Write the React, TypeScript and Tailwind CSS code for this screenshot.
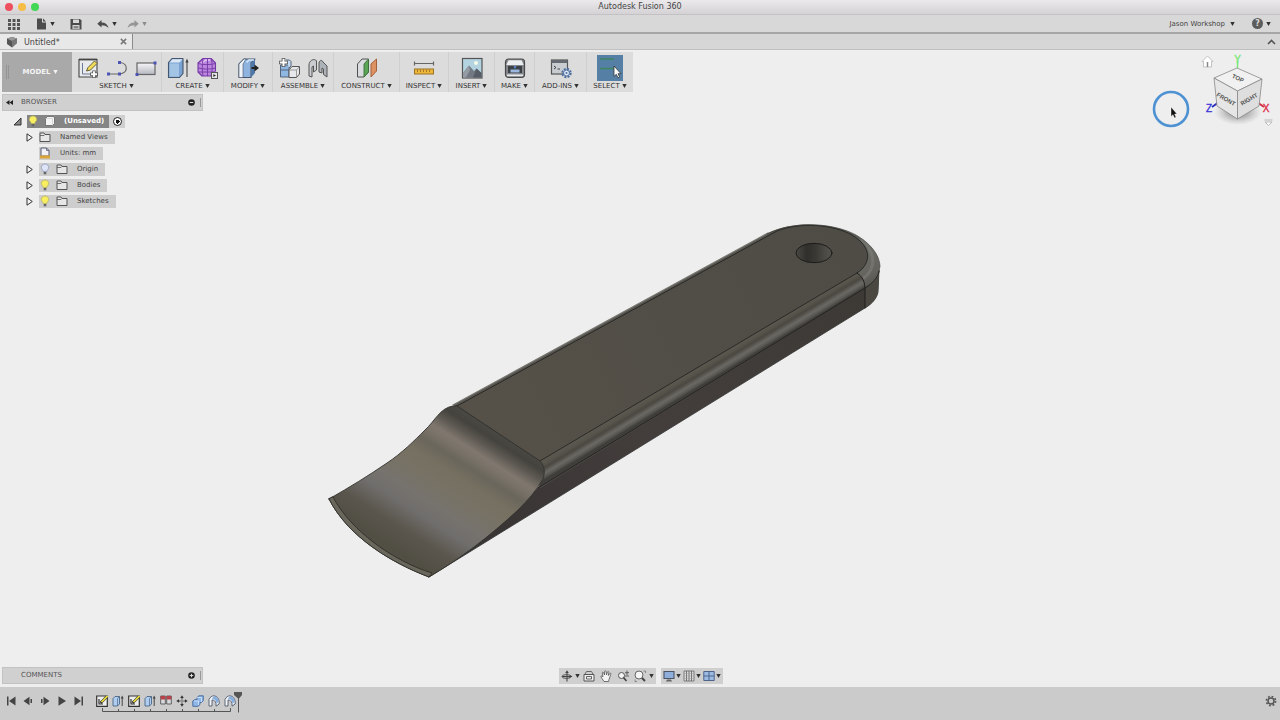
import React from "react";

const Caret = ({ className = "text-[#333]" }: { className?: string }) => (
  <svg viewBox="0 0 5 4" className={`w-[5px] h-1 shrink-0 ${className}`} aria-hidden="true">
    <path d="M.300 0H4.700L2.500 4Z" fill="currentColor" />
  </svg>
);

interface IconProps {
  children: React.ReactNode;
  className?: string;
  box?: number;
}

const Icon: React.FC<IconProps> = ({ children, className = "w-[22px] h-[22px]", box = 22 }) => (
  <svg viewBox={`0 0 ${box} ${box}`} className={`shrink-0 ${className}`} fill="none" aria-hidden="true">
    {children}
  </svg>
);

const SketchIcon = () => (
  <Icon>
    <path d="M2 2.500H20V20H2Z" fill="#e9eaec" stroke="#444" strokeWidth="1.100" />
    <path d="M2 2.500H20" stroke="#444" strokeWidth="1.800" />
    <path d="M5.500 6V17H14" stroke="#6a7a98" strokeWidth="1" />
    <path d="M9.500 14L11 10.500L17.500 4L20 6.500L13.500 13Z" fill="#f1dc5a" stroke="#55502a" strokeWidth=".9" />
    <path d="M17 13.500V21M13.200 17.300H20.800" stroke="#555" strokeWidth="3.400" />
    <path d="M17 14.300V20.300M14 17.300H20" stroke="#fff" strokeWidth="1.900" />
  </Icon>
);

const SplineIcon = () => (
  <Icon>
    <path d="M2 17H13C22 17 23 6.500 14 5.500" stroke="#666" strokeWidth="1.200" />
    <path d="M1 15.500h3v3H1zM12 15.500h3v3h-3zM12 4h3v3h-3z" fill="#4d55b4" />
  </Icon>
);

const RectIcon = () => (
  <Icon>
    <rect x="2" y="6" width="18" height="11.500" fill="url(#rectFill)" stroke="#666" strokeWidth="1.200" />
    <path d="M.500 16h3v3h-3zM18.500 4.500h3v3h-3z" fill="#4d55b4" />
    <defs>
      <linearGradient id="rectFill" x1="0" y1="0" x2="0" y2="1">
        <stop stopColor="#f6f6f8" />
        <stop offset="1" stopColor="#b5b8c0" />
      </linearGradient>
    </defs>
  </Icon>
);

const ExtrudeIcon = () => (
  <Icon>
    <path d="M1.500 5.500L5 1.500H16V16.500L12.500 20.500H1.500Z" fill="#7aa3d3" stroke="#46566c" strokeWidth="1.100" strokeLinejoin="round" />
    <path d="M2.500 5.500L5.500 2.200H15.500L12.500 5.500Z" fill="#dbe7f5" />
    <path d="M2.500 6.500H12V19.700H2.500Z" fill="#a4c4e6" />
    <path d="M20 20V5" stroke="#444" strokeWidth="1.100" />
    <path d="M20 1.500L18.400 5.500H21.600Z" fill="#444" />
  </Icon>
);

const FormIcon = () => (
  <Icon>
    <path d="M2 6L7 1.500H15L19.500 6V14L15 19H6L2 15Z" fill="#bb86dd" stroke="#7438a6" strokeWidth="1.100" strokeLinejoin="round" />
    <path d="M5 6.500L10 3H14" stroke="#e2c6f4" strokeWidth="1.500" />
    <path d="M2 6.500C8 8 14 8 19.500 6.500M2 11C8 12.500 14 12.500 19.500 11M2.500 15H18M7 2C6 8 6 13 7 19M11.500 1.500V19M15.500 2C16.500 8 16.500 14 15 19" stroke="#7438a6" strokeWidth=".9" />
    <rect x="15.500" y="15.500" width="6" height="6" fill="#e6e6e6" stroke="#555" />
    <path d="M17.300 17L20 18.500L17.300 20Z" fill="#333" />
  </Icon>
);

const PressPullIcon = () => (
  <Icon>
    <path d="M2 7L7 2H18L14 6V20.500H2Z" fill="#8db3de" stroke="#46566c" strokeWidth="1.100" strokeLinejoin="round" />
    <path d="M14 6L18 2V16L14 20.500Z" fill="#4f78a8" />
    <path d="M2 7L7 2H9L6 7V20.500H2Z" fill="#eef3f8" stroke="#46566c" strokeWidth=".6" />
    <path d="M9.500 5.500L12 3H17" stroke="#d6e6f8" strokeWidth="1.500" />
    <path d="M14.500 11H18" stroke="#222" strokeWidth="2" />
    <path d="M17.500 7.500L22 11L17.500 14.500Z" fill="#222" />
  </Icon>
);

const ComponentIcon = () => (
  <Icon>
    <path d="M2.500 8V20H11V8Z" fill="#90b6e2" stroke="#53647b" strokeWidth="1" />
    <path d="M2.500 13H11M8 3H11.500L13 4.500V9L11 11" fill="#c6dbf3" stroke="#53647b" strokeWidth="1" />
    <path d="M11 13L14 9.500H21.500V17L18.500 20.500H11Z" fill="#e6e8eb" stroke="#555" strokeWidth="1" />
    <path d="M11 13H18.500V20M18.500 13L21.500 9.500" stroke="#888" strokeWidth=".8" />
    <path d="M5.500 1V10M1 5.500H10" stroke="#555" strokeWidth="3.600" />
    <path d="M5.500 1.800V9.200M1.800 5.500H9.200" stroke="#fff" strokeWidth="2" />
  </Icon>
);

const JointIcon = () => (
  <Icon>
    <path d="M2 19V8C2 3 8 1 9.500 4V13L6.500 15V9L5 10V20Z" fill="#c9ccd0" stroke="#555" strokeWidth="1" strokeLinejoin="round" />
    <path d="M12 15V6C12.500 3 15 2.500 16 5L20 9V20L16.500 17.500V12L15 11V16Z" fill="#adb2b9" stroke="#555" strokeWidth="1" strokeLinejoin="round" />
  </Icon>
);

const PlaneIcon = () => (
  <Icon>
    <path d="M1.500 7L6 2H12.500V15L8 20H1.500Z" fill="#d9dbde" stroke="#4d5250" strokeWidth="1" strokeLinejoin="round" />
    <path d="M8 7L12.500 2V15L8 20Z" fill="#5aa456" stroke="#3a713b" strokeWidth=".9" />
    <path d="M15 7L20.500 2V14L15 20Z" fill="#de9263" stroke="#a3613b" strokeWidth="1" />
  </Icon>
);

const MeasureIcon = () => (
  <Icon>
    <path d="M1.500 6.500H20.500M1.500 4.500V8.500M20.500 4.500V8.500" stroke="#666" strokeWidth="1.200" />
    <rect x="1.500" y="12" width="19" height="5" fill="#eeb63a" stroke="#9a7425" strokeWidth="1" />
    <path d="M4.500 12.500V15M7.500 12.500V15M10.500 12.500V15M13.500 12.500V15M16.500 12.500V15" stroke="#9a7425" strokeWidth=".9" />
  </Icon>
);

const DecalIcon = () => (
  <Icon>
    <rect x="1.500" y="1.500" width="19.500" height="19.500" fill="#b3d3e0" stroke="#555" strokeWidth="1.200" />
    <circle cx="15" cy="6" r="2" fill="#f5fbe8" />
    <path d="M2 16L8 8.500L13 14L15.500 11.500L20.500 16V20.500H2Z" fill="#727983" />
    <path d="M2 16L8 8.500L9 13L5 20.500H2Z" fill="#949ba3" />
    <path d="M12 20.500L15.500 11.500L20.500 16V20.500Z" fill="#565d67" />
  </Icon>
);

const PrinterIcon = () => (
  <Icon>
    <rect x="1.500" y="2" width="19" height="18.500" rx="3" fill="#85898d" stroke="#4a4a4a" strokeWidth="1.200" />
    <path d="M4.500 3.200H17.500L19.700 8H2.300Z" fill="#eceeef" />
    <rect x="4" y="9" width="14" height="7" fill="#3c4047" />
    <path d="M6.500 15.500V12.500H15.500V15.500Z" fill="#9bb8de" />
    <path d="M9.500 9H12.500L11 12.500Z" fill="#5d84c8" />
    <path d="M2.800 18.300H19.200" stroke="#e8eaec" strokeWidth="1.700" />
  </Icon>
);

const ScriptIcon = () => (
  <Icon>
    <rect x="1.500" y="3" width="16" height="14" fill="#c9ccd1" stroke="#555" strokeWidth="1.200" />
    <path d="M1.500 3H17.500V6H1.500Z" fill="#666b71" />
    <path d="M4 9L6 10.500L4 12M7.500 12H10" stroke="#444" strokeWidth="1" />
    <circle cx="16.500" cy="16" r="4.200" stroke="#4d6fa0" strokeWidth="2" strokeDasharray="2 1.300" />
    <circle cx="16.500" cy="16" r="3" fill="#dde7f4" stroke="#4d6fa0" strokeWidth="1" />
    <circle cx="16.500" cy="16" r="1" fill="#4d6fa0" />
  </Icon>
);

const SelectIcon = () => (
  <Icon className="w-[26px] h-[26px]" box={26}>
    <rect width="26" height="26" fill="#557fa5" />
    <path d="M3 4H17M3 13.500H18" stroke="#3c8660" strokeWidth="1.500" />
    <path d="M17 11V21.500L19.300 19.300L21 22.800L22.700 22L21 18.700H24Z" fill="#fff" stroke="#333" strokeWidth=".8" />
  </Icon>
);

interface ToolGroup {
  label: string;
  width: string;
  icons: React.FC[];
}

const toolGroups: ToolGroup[] = [
  { label: "SKETCH", width: "w-[90px]", icons: [SketchIcon, SplineIcon, RectIcon] },
  { label: "CREATE", width: "w-[62px]", icons: [ExtrudeIcon, FormIcon] },
  { label: "MODIFY", width: "w-[49px]", icons: [PressPullIcon] },
  { label: "ASSEMBLE", width: "w-[61px]", icons: [ComponentIcon, JointIcon] },
  { label: "CONSTRUCT", width: "w-[66px]", icons: [PlaneIcon] },
  { label: "INSPECT", width: "w-[49px]", icons: [MeasureIcon] },
  { label: "INSERT", width: "w-[46px]", icons: [DecalIcon] },
  { label: "MAKE", width: "w-[40px]", icons: [PrinterIcon] },
  { label: "ADD-INS", width: "w-[52px]", icons: [ScriptIcon] },
  { label: "SELECT", width: "w-[46px]", icons: [SelectIcon] },
];

const Bulb = ({ on = true }: { on?: boolean }) => (
  <Icon box={12} className="w-3 h-3">
    <path d="M6 1C3.500 1 2.300 2.800 2.300 4.500C2.300 6.300 4.200 7 4.200 8.500H7.800C7.800 7 9.700 6.300 9.700 4.500C9.700 2.800 8.500 1 6 1Z" fill={on ? "#f7ee62" : "#dfe5f7"} stroke={on ? "#b8b05a" : "#8c98bc"} strokeWidth=".8" />
    <path d="M4.700 9H7.300V11.300H4.700Z" fill="#666" />
  </Icon>
);

const Folder = () => (
  <Icon box={12} className="w-3 h-3">
    <path d="M1 2H5L6 3.500H11V10.500H1Z" fill="#e6e6e6" stroke="#555" strokeWidth="1" />
    <path d="M6 3.500L5 4.500H1" stroke="#555" strokeWidth=".8" />
  </Icon>
);

const UnitsIcon = () => (
  <Icon box={12} className="w-3 h-3">
    <path d="M2 1H7.500L10 3.500V9H2Z" fill="#f2f2f6" stroke="#555a70" strokeWidth="1" />
    <path d="M7.500 1V3.500H10" stroke="#555a70" strokeWidth=".8" />
    <path d="M1 8.500H11V11.500H1Z" fill="#dca53a" />
  </Icon>
);

interface BrowserItem {
  label: string;
  kind: "folder" | "units";
  bulb?: "on" | "off";
}

const browserItems: BrowserItem[] = [
  { label: "Named Views", kind: "folder" },
  { label: "Units: mm", kind: "units" },
  { label: "Origin", kind: "folder", bulb: "off" },
  { label: "Bodies", kind: "folder", bulb: "on" },
  { label: "Sketches", kind: "folder", bulb: "on" },
];

const TitleBar = () => (
  <header>
    <div className="relative flex h-[15px] items-center justify-center bg-linear-to-b from-[#ebe9eb] to-[#d4d2d4] border-b border-[#c4c2c4]">
      <div className="absolute left-[5px] flex gap-[5px]">
        <button aria-label="Close" className="size-[8px] rounded-full bg-[#ee5060]" />
        <button aria-label="Minimize" className="size-[8px] rounded-full bg-[#f5bd45]" />
        <button aria-label="Zoom" className="size-[8px] rounded-full bg-[#42d754]" />
      </div>
      <h1 className="text-[8px] leading-3 text-[#444]">Autodesk Fusion 360</h1>
    </div>
    <div className="flex h-[19px] items-center justify-between border-b-2 border-[#a6a6a6] bg-[#d8d8d8] pl-2 pr-[9px] text-[#444]">
      <div className="flex items-center">
        <button aria-label="Data panel" className="mr-[16px]">
          <Icon box={12} className="w-3 h-3">
            <path d="M0 1h3v3H0zM4.500 1h3v3h-3zM9 1h3v3H9zM0 5h3v3H0zM4.500 5h3v3h-3zM9 5h3v3H9zM0 9h3v3H0zM4.500 9h3v3h-3zM9 9h3v3H9z" fill="#555" />
          </Icon>
        </button>
        <button aria-label="File" className="flex items-center gap-[2px] mr-[15px]">
          <Icon box={12} className="w-3 h-3">
            <path d="M1 .500H6V4.500H10V11.500H1Z" fill="#4c4c4c" />
            <path d="M7 .500L10 3.500H7Z" fill="#4c4c4c" />
          </Icon>
          <Caret />
        </button>
        <button aria-label="Save" className="mr-[15px]">
          <Icon box={12} className="w-3 h-3">
            <path d="M.500 1H10L11.500 2.500V11.500H.500Z" fill="#4c4c4c" />
            <path d="M3 1.500H9V5H3ZM2.500 7H9.500V11H2.500Z" fill="#d8d8d8" />
            <path d="M3.500 8H8.500V10.500H3.500Z" fill="#888" />
          </Icon>
        </button>
        <button aria-label="Undo" className="flex items-center gap-[3px] mr-[10px]">
          <Icon box={12} className="w-3 h-3">
            <path d="M4.500 2V4.500C8.500 4.500 10.800 6.500 11.500 10C9.500 8 7 7.300 4.500 7.300V9.500L.300 5.700Z" fill="#4c4c4c" />
          </Icon>
          <Caret />
        </button>
        <button aria-label="Redo" className="flex items-center gap-[3px]">
          <Icon box={12} className="w-3 h-3">
            <path d="M7.500 2V4.500C3.500 4.500 1.200 6.500 .500 10C2.500 8 5 7.300 7.500 7.300V9.500L11.700 5.700Z" fill="#959595" />
          </Icon>
          <Caret className="text-[#8c8c8c]" />
        </button>
      </div>
      <div className="flex items-center gap-[17px]">
        <button className="flex items-center gap-[5px] text-[7px] leading-3 text-[#444]">
          Jason Workshop
          <Caret />
        </button>
        <button aria-label="Help" className="flex items-center gap-[3px]">
          <span className="flex size-[11px] items-center justify-center rounded-full bg-[#5c5c5c] text-[8px] leading-none font-bold text-[#ddd]">?</span>
          <Caret />
        </button>
      </div>
    </div>
    <div className="flex h-[16px] items-stretch justify-between border-b border-[#c0c0c0] bg-[#d6d6d6]">
      <div className="flex w-[133px] items-center border-r border-[#8a8a8a] bg-[#e8e8e8] pl-[6px] pr-[5px]">
        <Icon box={12} className="w-3 h-3">
          <path d="M1 2.500L6 1L11 2.500V7L6 11.500L1 8Z" fill="#555" />
          <path d="M1 2.500L6 5L11 2.500L6 1Z" fill="#999" />
          <path d="M6 5L11 2.500V7L6 11.500Z" fill="#777" />
        </Icon>
        <button className="ml-[6px] pt-[2px] text-[8px] leading-3 text-[#444]">Untitled*</button>
        <button aria-label="Close tab" className="ml-auto">
          <svg viewBox="0 0 8 8" className="size-[7px]">
            <path d="M1 1L7 7M7 1L1 7" stroke="#777" strokeWidth="1.700" />
          </svg>
        </button>
      </div>
      <button aria-label="Collapse toolbar" className="pr-1">
        <svg viewBox="0 0 9 6" className="w-[9px] h-[6px]">
          <path d="M1 5L4.500 1.500L8 5" fill="none" stroke="#555" strokeWidth="1.600" />
        </svg>
      </button>
    </div>
  </header>
);

const Toolbar = () => (
  <nav className="relative mt-[2px] ml-[2px] flex h-[40px] self-start bg-[#dcdcdc]" aria-label="Tools">
    <button className="relative flex w-[70px] items-center justify-center gap-[3px] bg-[#a9a9a9] pl-[7px] text-[7px] font-bold text-[#f4f4f4]">
      <span className="absolute left-1 top-[13px] h-[14px] w-[3px] border-x border-[#959595]" />
      MODEL
      <Caret className="text-[#f4f4f4]" />
    </button>
    {toolGroups.map((group) => (
      <div key={group.label} className={`flex flex-col items-center border-r border-[#cfcfcf] last:border-r-0 ${group.width}`}>
        <div className="flex h-[29px] items-center gap-[7px] pt-[3px]">
          {group.icons.map((ToolIcon, i) => (
            <button key={i} aria-label={`${group.label} ${i + 1}`}>
              <ToolIcon />
            </button>
          ))}
        </div>
        <button className="flex items-center gap-[2px] text-[7px] leading-[10px] whitespace-nowrap text-[#333]">
          {group.label}
          <Caret />
        </button>
      </div>
    ))}
  </nav>
);

const PanelHeader = ({ title, collapsible }: { title: string; collapsible?: boolean }) => (
  <div className="flex h-[17px] w-[201px] items-center border border-[#c2c2c2] bg-[#d0d0d0] pl-[3px] pr-px text-[7px] text-[#555]">
    <button aria-label={`Collapse ${title.toLowerCase()}`} className="w-[15px]">
      {collapsible && (
        <svg viewBox="0 0 7 5" className="w-[7px] h-[5px]">
          <path d="M3.500 0V5L0 2.500ZM7 0V5L3.500 2.500Z" fill="#222" />
        </svg>
      )}
    </button>
    <h2>{title}</h2>
    <button aria-label={`${title} options`} className="ml-auto mr-[4px]">
      <svg viewBox="0 0 7 7" className="size-[7px]">
        <circle cx="3.500" cy="3.500" r="3.300" fill="#222" />
        <path d={collapsible ? "M1.700 3.500H5.300" : "M1.700 3.500H5.300M3.500 1.700V5.300"} stroke="#ddd" strokeWidth="1.100" />
      </svg>
    </button>
    <span className="h-[9px] w-[2px] border-r border-[#999]" />
  </div>
);

const Browser = () => (
  <section className="relative mt-[2px] ml-[2px] self-start text-[7px] leading-[13px] text-[#444]">
    <PanelHeader title="BROWSER" collapsible />
    <div className="mt-[2px] flex h-4 items-center pl-[11px]">
      <button aria-label="Collapse root" className="mr-[5px]">
        <svg viewBox="0 0 9 9" className="size-[9px]">
          <path d="M8 1V8H1Z" fill="#888" stroke="#333" strokeWidth="1" />
        </svg>
      </button>
      <button className="flex h-[13px] w-[82px] items-center bg-[#858585] font-bold text-white">
        <Bulb />
        <Icon box={12} className="w-3 h-3 ml-[5px] mr-[8px]">
          <path d="M1.500 3.500L3.500 1.500H10.500V8.500L8.500 10.500H1.500Z" fill="#f4f4f4" stroke="#666" strokeWidth=".8" strokeLinejoin="round" />
          <path d="M8.500 10.500V3.500H1.500M8.500 3.500L10.500 1.500" stroke="#ccc" strokeWidth=".7" />
        </Icon>
        (Unsaved)
      </button>
      <label className="flex h-[13px] w-[16px] items-center justify-center bg-[#cfcfcf]">
        <input
          type="radio"
          defaultChecked
          aria-label="Activate component"
          className="size-[9px] appearance-none rounded-full border border-[#222] bg-[radial-gradient(circle,#111_0_2px,#fff_2px)]"
        />
      </label>
    </div>
    <ul>
      {browserItems.map((item) => (
        <li key={item.label} className="flex h-4 items-center pl-6">
          {item.kind === "folder" ? (
            <button aria-label={`Expand ${item.label}`} className="w-[13px]">
              <svg viewBox="0 0 7 9" className="w-[7px] h-[9px]">
                <path d="M1 .800L6.300 4.500L1 8.200Z" fill="#f5f5f5" stroke="#333" strokeWidth="1" />
              </svg>
            </button>
          ) : (
            <span className="w-[13px]" />
          )}
          <button className="flex h-[13px] items-center bg-[#cdcdcd] pr-[7px]">
            {item.bulb && (
              <span className="mr-[5px]">
                <Bulb on={item.bulb === "on"} />
              </span>
            )}
            {item.kind === "units" ? <UnitsIcon /> : <Folder />}
            <span className="ml-[9px]">{item.label}</span>
          </button>
        </li>
      ))}
    </ul>
  </section>
);

const Model = () => (
  <svg viewBox="0 50 1280 637" className="absolute inset-0 h-full w-full" role="img" aria-label="Tool handle model">
    <defs>
      <linearGradient id="blade" gradientUnits="userSpaceOnUse" x1="497" y1="433" x2="415" y2="562">
        <stop offset="0" stopColor="#4a4843" />
        <stop offset=".05" stopColor="#45433e" />
        <stop offset=".11" stopColor="#5d5952" />
        <stop offset=".18" stopColor="#80786f" />
        <stop offset=".22" stopColor="#7a736a" />
        <stop offset=".29" stopColor="#6a665c" />
        <stop offset=".38" stopColor="#757060" />
        <stop offset=".5" stopColor="#777265" />
        <stop offset=".62" stopColor="#76736e" />
        <stop offset=".72" stopColor="#706e6c" />
        <stop offset=".86" stopColor="#5a564d" />
        <stop offset="1" stopColor="#514e44" />
      </linearGradient>
      <linearGradient id="top" gradientUnits="userSpaceOnUse" x1="500" y1="430" x2="860" y2="250">
        <stop stopColor="#555148" />
        <stop offset=".5" stopColor="#514e47" />
        <stop offset="1" stopColor="#4e4c45" />
      </linearGradient>
      <linearGradient id="bevel" gradientUnits="userSpaceOnUse" x1="700" y1="366" x2="709" y2="381">
        <stop stopColor="#5b594f" />
        <stop offset=".2" stopColor="#56544b" />
        <stop offset=".42" stopColor="#4a4841" />
        <stop offset=".68" stopColor="#6b6963" />
        <stop offset=".85" stopColor="#5a5853" />
        <stop offset="1" stopColor="#403e3a" />
      </linearGradient>
      <linearGradient id="rim" gradientUnits="userSpaceOnUse" x1="840" y1="225" x2="880" y2="290">
        <stop stopColor="#56554f" />
        <stop offset=".5" stopColor="#6b6b66" />
        <stop offset=".75" stopColor="#64635e" />
        <stop offset="1" stopColor="#4b4943" />
      </linearGradient>
      <linearGradient id="hole" x1="0" x2="1">
        <stop stopColor="#4a4843" />
        <stop offset=".3" stopColor="#302f2b" />
        <stop offset=".55" stopColor="#3a3834" />
        <stop offset=".8" stopColor="#4c4a44" />
        <stop offset="1" stopColor="#55534d" />
      </linearGradient>
      <linearGradient id="side" gradientUnits="userSpaceOnUse" x1="500" y1="520" x2="870" y2="300">
        <stop stopColor="#393534" />
        <stop offset=".4" stopColor="#433e3c" />
        <stop offset="1" stopColor="#3d3a36" />
      </linearGradient>
    </defs>
    <g strokeLinejoin="round" strokeLinecap="round">
      <path d="M538 488L865 287C872 283 877 278 879 270L878 292C877 298 872 304 865 308L429 577Z" fill="url(#side)" stroke="#333" strokeWidth=".8" />
      <path d="M865 287C872 283 877 278 879 270L878 292C877 298 872 304 865 308Z" fill="#4b4842" />
      <path d="M453 405L768 233C794 220 834 223 856 235C873 245 880 257 880 267C880 277 875 283 865 288L540 488L530 455Z" fill="url(#rim)" />
      <path d="M453 405L768 233" stroke="#77756f" strokeWidth="1.200" />
      <path d="M862 240C876 253 876 268 864 278" fill="none" stroke="#85857f" strokeOpacity=".45" strokeWidth="3" />
      <path d="M540 461L857 273C862 277 865 281 865 288L538 488C543 480 546 472 540 461Z" fill="url(#bevel)" />
      <path d="M457 406L777 231C800 222 832 224 852 235C872 247 872 263 857 273L540 461Z" fill="url(#top)" stroke="#242421" strokeWidth=".9" />
      <path d="M857 273C863 277 865 282 865 290V308" fill="none" stroke="#1f1e1c" strokeWidth="1" />
      <path d="M767 234C794 220 834 223 856 235C873 245 880 257 880 267" fill="none" stroke="#44433f" strokeWidth=".7" />
      <path d="M538 488L865 288C873 283 878 278 879 271" fill="none" stroke="#242220" strokeWidth="1" />
      <ellipse cx="814" cy="253" rx="18" ry="9.700" fill="url(#hole)" stroke="#1c1c1a" strokeWidth="1" />
      <path
        d="M329 499C350 487 368 476 387 463C402 453 414 441 425 430C435 421 440 408 453 406L457 406L540 461C545 466 545 473 543 479C536 491 528 500 518 510C489 537 461 558 429 577C392 563 348 537 329 499Z"
        fill="url(#blade)"
        stroke="#33322e"
        strokeWidth=".9"
      />
      <path d="M329 499C348 537 392 563 429 577L432 573C393 561 350 530 333 497Z" fill="#69665b" stroke="#2a2926" strokeWidth=".8" />
    </g>
  </svg>
);

const ViewCube = () => (
  <div className="absolute right-0 top-0 h-[80px] w-[82px]">
    <button aria-label="Home" className="absolute left-[3px] top-[5px]">
      <svg viewBox="0 0 13 13" className="size-[13px]">
        <path d="M1 6.500L6.500 1L12 6.500H10.500V12H2.500V6.500Z" fill="#fff" stroke="#bbb" strokeWidth=".9" />
        <path d="M6.500 7V12" stroke="#888" strokeWidth="1.500" />
      </svg>
    </button>
    <svg viewBox="1198 50 82 80" className="h-full w-full" role="img" aria-label="View cube">
      <defs>
        <radialGradient id="cubeShadow">
          <stop stopColor="#666" stopOpacity=".85" />
          <stop offset=".5" stopColor="#888" stopOpacity=".5" />
          <stop offset="1" stopColor="#aaa" stopOpacity="0" />
        </radialGradient>
      </defs>
      <ellipse cx="1238" cy="112" rx="24" ry="13" fill="url(#cubeShadow)" />
      <path d="M1237.500 68V60" stroke="#7de87b" strokeWidth="1.500" />
      <path d="M1219 102L1212 107" stroke="#2e2ab8" strokeWidth="1.800" />
      <path d="M1257 102L1264 107" stroke="#d32b48" strokeWidth="1.800" />
      <g stroke="#888" strokeWidth=".8" strokeLinejoin="round">
        <path d="M1214 78L1237 68L1262 79L1237.500 91Z" fill="#f1f1f1" />
        <path d="M1214 78L1237.500 91V119L1217 106Z" fill="#e6e6e6" />
        <path d="M1262 79L1237.500 91V119L1259 106Z" fill="#dedede" />
      </g>
      <g fontFamily='"Liberation Sans", sans-serif' fontWeight="bold" fontSize="6" fill="#555" textAnchor="middle">
        <text transform="translate(1237 80) rotate(25)">TOP</text>
        <text transform="translate(1225 101) rotate(30)">FRONT</text>
        <text transform="translate(1250 101) rotate(-30)">RIGHT</text>
      </g>
      <g fontFamily='"Liberation Sans", sans-serif' fontSize="10" textAnchor="middle">
        <text x="1237.500" y="63" fill="#7de87b" stroke="#7de87b" strokeWidth=".4">Y</text>
        <text x="1209" y="112" fill="#3b35d8" stroke="#3b35d8" strokeWidth=".4">Z</text>
        <text x="1266" y="112" fill="#e0304e" stroke="#e0304e" strokeWidth=".4">X</text>
      </g>
    </svg>
    <button aria-label="View cube menu" className="absolute right-[7px] bottom-[4px]">
      <svg viewBox="0 0 9 7" className="w-[9px] h-[7px]">
        <path d="M.500 1H8.500M1 3H8L4.500 6.500Z" fill="#fff" stroke="#aaa" strokeWidth=".8" />
      </svg>
    </button>
  </div>
);

const Pointer = () => (
  <svg viewBox="0 0 38 38" className="absolute right-[90px] top-[40px] size-[38px]" aria-hidden="true">
    <circle cx="19" cy="19" r="17" fill="none" stroke="#4f92d3" strokeWidth="2.600" />
    <path d="M19 17V26.500L21 24.700L22.500 28L24 27.300L22.600 24H25Z" fill="#111" stroke="#fff" strokeWidth=".4" />
  </svg>
);

const NavBar = () => (
  <div className="flex items-center gap-[5px]">
    <div className="flex h-[16px] items-center bg-[#cfcfcf] pl-[2px] pr-[2px]">
      <button aria-label="Orbit" className="flex items-center gap-[2px] mr-[3px]">
        <Icon box={12} className="w-3 h-3">
          <path d="M6 2V11.500M1 6.500H11" stroke="#444" strokeWidth="1.100" />
          <ellipse cx="5.500" cy="6.500" rx="4.500" ry="1.900" stroke="#555" strokeWidth="1" />
          <path d="M6 .300L7.800 3H4.200ZM8 8L11.500 6.500L9 5Z" fill="#444" />
        </Icon>
        <Caret />
      </button>
      <button aria-label="Look at" className="mr-[5px]">
        <Icon box={12} className="w-3 h-3">
          <path d="M1 4.500H11V11H1Z" fill="#f0f0f0" stroke="#555" strokeWidth="1" />
          <path d="M2 4L3.500 1.500H8.500L10 4" stroke="#666" strokeWidth="1" />
          <path d="M3.500 6.500H8.500V9H3.500Z" stroke="#555" strokeWidth=".9" />
        </Icon>
      </button>
      <button aria-label="Pan" className="mr-[5px]">
        <Icon box={12} className="w-3 h-3">
          <path d="M4 11.500L1 7C.500 6 1.500 5.500 2.500 6.500L3 7L2.300 2.800C2.300 2 3.300 2 3.600 2.800L4.500 5L4.600 1.500C4.800 .500 6 .500 6.100 1.500L6.500 5L7.500 1.800C8 1 9 1.300 8.800 2.300L8.400 5.500L9.800 3.500C10.500 2.800 11.200 3.500 10.800 4.300L9 9.500L8.500 11.500Z" fill="#f5f5f5" stroke="#555" strokeWidth=".8" />
        </Icon>
      </button>
      <button aria-label="Zoom" className="mr-[5px]">
        <Icon box={12} className="w-3 h-3">
          <circle cx="4.500" cy="5.500" r="3" fill="#f5f5f5" stroke="#555" strokeWidth="1" />
          <path d="M6.500 7.500L9.500 11" stroke="#444" strokeWidth="1.700" />
          <path d="M10 .500V5M8 2.700H12M8 6H12" stroke="#555" strokeWidth=".9" />
        </Icon>
      </button>
      <button aria-label="Fit" className="flex items-center gap-[3px]">
        <Icon box={12} className="w-3 h-3">
          <circle cx="5" cy="5" r="4" fill="#f5f5f5" stroke="#666" strokeWidth="1" />
          <path d="M8 8L11 11" stroke="#444" strokeWidth="2" />
          <path d="M9.500 1H11.500V3M1 9.500V11.500H3" stroke="#777" strokeWidth=".8" />
        </Icon>
        <Caret />
      </button>
    </div>
    <div className="flex h-[16px] items-center gap-[2px] bg-[#cfcfcf] pl-[2px] pr-[2px]">
      <button aria-label="Display settings" className="flex items-center gap-px">
        <Icon box={12} className="w-3 h-3">
          <path d="M1 1.500H11V8.500H1Z" fill="#8eaedb" stroke="#4b5566" strokeWidth="1.100" />
          <path d="M4 9.500H8L9 11.500H3Z" fill="#666" />
        </Icon>
        <Caret />
      </button>
      <button aria-label="Grid settings" className="flex items-center gap-px">
        <Icon box={12} className="w-3 h-3">
          <path d="M1 1H11V11H1Z" fill="#ddd" stroke="#666" strokeWidth=".8" />
          <path d="M3.500 1V11M6 1V11M8.500 1V11" stroke="#666" strokeWidth=".9" />
          <path d="M1 3.500H11M1 6H11M1 8.500H11" stroke="#999" strokeWidth=".5" />
        </Icon>
        <Caret />
      </button>
      <button aria-label="Viewports" className="flex items-center gap-px">
        <Icon box={12} className="w-3 h-3">
          <path d="M.800 1.500H11.200V10.500H.800ZM6 1.500V10.500M.800 6H11.200" fill="#9cbce6" stroke="#4f6488" strokeWidth="1" />
        </Icon>
        <Caret />
      </button>
    </div>
  </div>
);

const SketchStep = () => (
  <Icon box={12} className="w-3 h-3">
    <path d="M.700 1H11.300V11.300H.700Z" fill="#eee" stroke="#333" strokeWidth="1.200" />
    <path d="M3 4V9H7" stroke="#333" strokeWidth="1.200" />
    <path d="M4.500 8L11 1.500" stroke="#333" strokeWidth="2.500" />
    <path d="M5.500 7L11.500 1" stroke="#f0e437" strokeWidth="1.700" />
  </Icon>
);

const ExtrudeStep = () => (
  <Icon box={12} className="w-3 h-3">
    <path d="M1 3.500L3 1.500H7.500V9L5.500 11H1Z" fill="#aecdf0" stroke="#4c6484" strokeWidth=".9" />
    <path d="M5.500 11V3.500L7.500 1.500" stroke="#4c6484" strokeWidth=".7" />
    <path d="M10.200 11V3" stroke="#444" strokeWidth="1" />
    <path d="M10.200 .500L8.700 3.500H11.700Z" fill="#444" />
  </Icon>
);

const PatternStep = () => (
  <Icon box={12} className="w-3 h-3">
    <path d="M.700 1H5.300V9H.700ZM6.700 1H11.300V9H6.700Z" fill="#d8dade" stroke="#555" strokeWidth=".9" />
    <path d="M.700 1H5.300V4.500H.700ZM6.700 1H11.300V4.500H6.700Z" fill="#b9424a" />
  </Icon>
);

const MoveStep = () => (
  <Icon box={12} className="w-3 h-3">
    <path d="M6 2V10M2 6H10" stroke="#444" strokeWidth="1" strokeDasharray="2 1" />
    <path d="M6 .300L7.800 3H4.200ZM6 11.700L7.800 9H4.200ZM.300 6L3 4.200V7.800ZM11.700 6L9 4.200V7.800Z" fill="#333" />
    <path d="M5 5h2v2H5z" fill="#fff" stroke="#444" strokeWidth=".7" />
  </Icon>
);

const CombineStep = () => (
  <Icon box={12} className="w-3 h-3">
    <path d="M.800 6L3 4.500H5V2.500L7 .800H11.300V5.500L9.500 7.500H8V9.500L6 11.300H.800Z" fill="#8fb7e8" stroke="#43679c" strokeWidth=".9" strokeLinejoin="round" />
    <path d="M5 2.500H9.500V7M2 6H6.500V10" stroke="#d5e6fa" strokeWidth=".8" />
  </Icon>
);

const FilletStep = () => (
  <Icon box={12} className="w-3 h-3">
    <path d="M1 11V4.500C2 2 4 .800 6 .800C9 1 11.200 4 11.200 7V9L8 11.200V8.500C7.500 6 5.500 4.500 4 5V11Z" fill="#f0f3f8" stroke="#505a6a" strokeWidth=".9" strokeLinejoin="round" />
    <path d="M3.500 4C6 3.300 8.200 5.500 8.500 8.500L10.800 7C10.600 4 8.500 1.300 6 1.300Z" fill="#86aede" />
  </Icon>
);

const timelineSteps: { name: string; Step: React.FC }[] = [
  { name: "Sketch1", Step: SketchStep },
  { name: "Extrude1", Step: ExtrudeStep },
  { name: "Sketch2", Step: SketchStep },
  { name: "Extrude2", Step: ExtrudeStep },
  { name: "Pattern1", Step: PatternStep },
  { name: "Move1", Step: MoveStep },
  { name: "Combine1", Step: CombineStep },
  { name: "Fillet1", Step: FilletStep },
  { name: "Fillet2", Step: FilletStep },
];

const playback = [
  { name: "Go to start", d: "M1 .500V9.500H2.500V.500ZM9.500 .500V9.500L3 5Z" },
  { name: "Step back", d: "M6.500 .800V9.200L.500 5ZM7.500 3V7H9V3Z" },
  { name: "Step forward", d: "M3.500 .800V9.200L9.500 5ZM1 3V7H2.500V3Z" },
  { name: "Play", d: "M1.500 .300V9.700L9 5Z" },
  { name: "Go to end", d: "M.500 .500V9.500L7 5ZM7.500 .500V9.500H9V.500Z" },
];

const Timeline = () => (
  <footer className="flex h-[33px] items-start bg-[#cbcbcb] pl-[6px] pr-[3px] pt-[8px]">
    <div className="flex h-3 items-center gap-[7px]">
      {playback.map((p) => (
        <button key={p.name} aria-label={p.name}>
          <Icon box={10} className="size-[10px]">
            <path d={p.d} fill="#444" />
          </Icon>
        </button>
      ))}
    </div>
    <ol className="ml-[10px] flex">
      {timelineSteps.map(({ name, Step }, i) => (
        <li key={name} className="flex w-4 flex-col items-center">
          <button aria-label={name}>
            <Step />
          </button>
          <svg viewBox="0 0 16 5" className="h-[5px] w-4" aria-hidden="true">
            <path d={i === 0 ? "M8.500 1V4.500H16" : i === 8 ? "M0 4.500H8.500V1" : "M0 4.500H16M8.500 2V4.500"} fill="none" stroke="#555" strokeWidth="1" />
          </svg>
        </li>
      ))}
    </ol>
    <button aria-label="Timeline marker" className="-ml-[5px] -mt-[4px]">
      <svg viewBox="0 0 10 22" className="h-[22px] w-[10px]">
        <path d="M1 1H9V4L6 7.500V21.500H5V7.500L1 4Z" fill="#555" />
      </svg>
    </button>
    <button aria-label="Timeline settings" className="ml-auto">
      <Icon box={12} className="w-3 h-3">
        <circle cx="6" cy="6" r="4.600" stroke="#555" strokeWidth="1.600" strokeDasharray="1.800 1.813" />
        <circle cx="6" cy="6" r="3" stroke="#555" strokeWidth="1.500" />
      </Icon>
    </button>
  </footer>
);

export default function App() {
  return (
    <div className="flex h-screen flex-col overflow-hidden bg-[#eeeeee] font-['DejaVu_Sans','Noto_Sans',sans-serif]">
      <TitleBar />
      <main className="relative flex flex-1 flex-col">
        <Model />
        <Toolbar />
        <Browser />
        <ViewCube />
        <Pointer />
        <div className="relative mt-auto mb-[3px] grid grid-cols-[1fr_auto_1fr] items-center pl-[2px]">
          <PanelHeader title="COMMENTS" />
          <NavBar />
        </div>
      </main>
      <Timeline />
    </div>
  );
}
